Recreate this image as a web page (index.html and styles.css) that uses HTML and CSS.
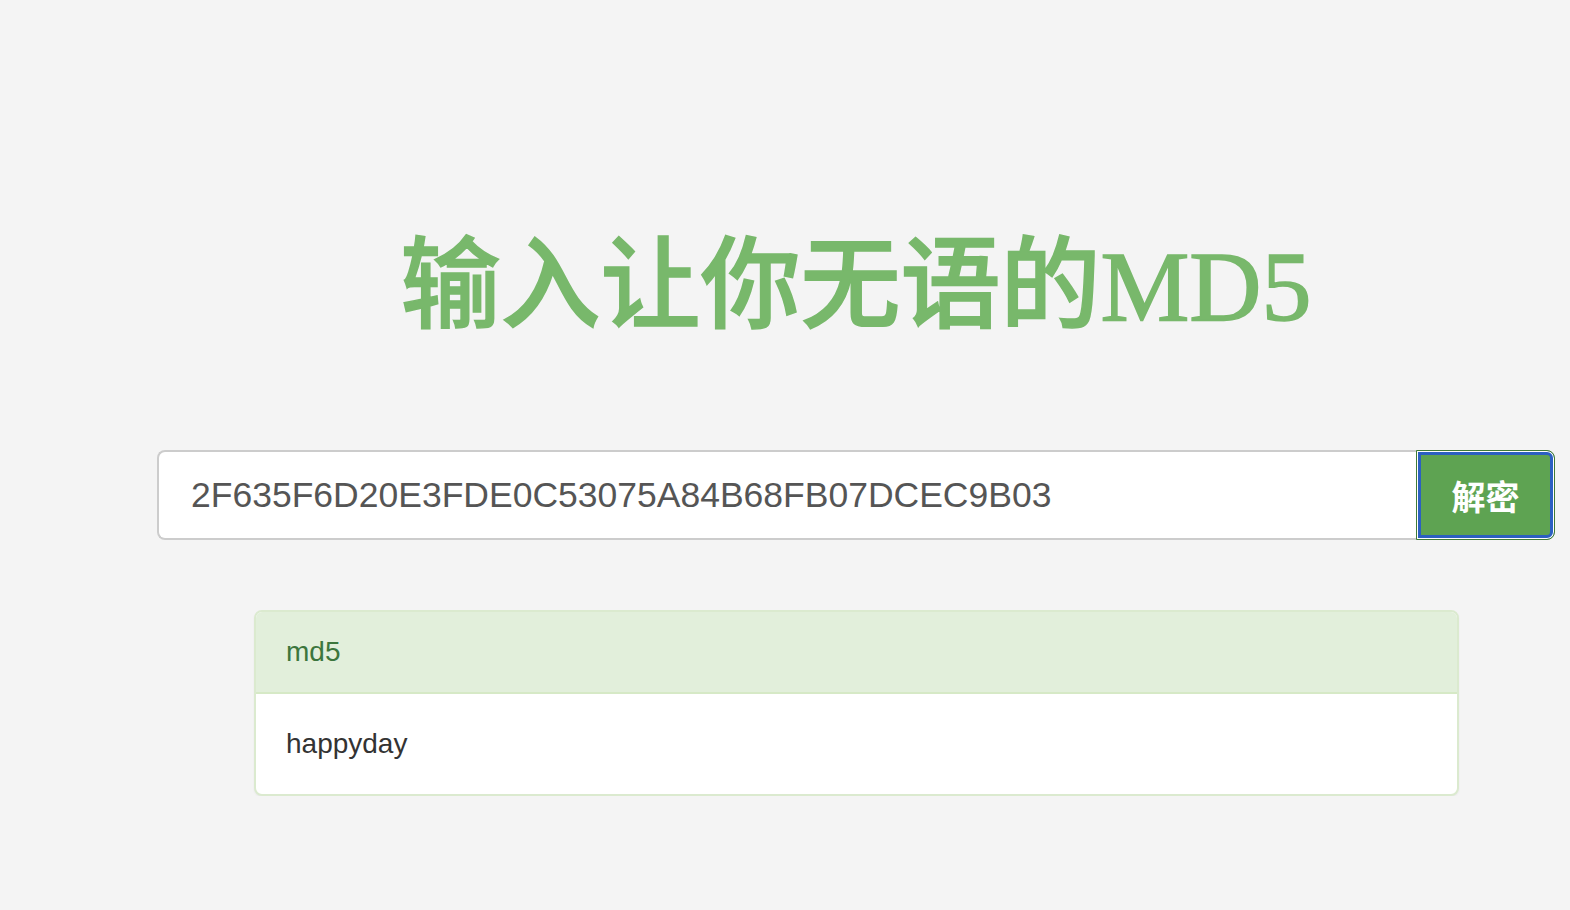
FILE: index.html
```html
<!DOCTYPE html>
<html lang="zh-CN">
<head>
  <meta charset="UTF-8">
  <meta name="viewport" content="width=device-width, initial-scale=1.0">
  <title>MD5 解密</title>
  <link rel="stylesheet" href="styles.css">
</head>
<body>

  <div class="container">
    <!-- Titolo -->
    <h1 class="title">输入让你无语的MD5</h1>

    <!-- Campo di ricerca -->
    <form class="search-group" onsubmit="return false;">
      <input class="search-input" type="text" value="2F635F6D20E3FDE0C53075A84B68FB07DCEC9B03">
      <button class="search-btn" type="submit">解密</button>
    </form>

    <!-- Risultato -->
    <div class="panel">
      <div class="panel-heading">md5</div>
      <div class="panel-body">happyday</div>
    </div>
  </div>

</body>
</html>
```

FILE: styles.css
```css
/* Pagina */
body {
  margin: 0;
  background-color: #f4f4f4;
  font-family: "Liberation Sans", Arial, "Noto Sans CJK SC", sans-serif;
  color: #333;
}

.container {
  width: 1398px;
  margin-left: 157px;
  padding-top: 231px;
}

/* Titolo */
.title {
  margin: 0 0 107px;
  text-align: center;
  font-family: "Liberation Serif", "Noto Sans CJK SC", serif;
  font-size: 100px;
  font-weight: 500;
  line-height: 112px;
  color: #78b86b;
  -webkit-text-stroke: 1.5px #78b86b;
}

/* Campo di ricerca */
.search-group {
  display: flex;
  height: 90px;
  margin: 0 0 70px;
}

.search-input {
  flex: 1;
  min-width: 0;
  box-sizing: border-box;
  height: 90px;
  padding: 0 32px;
  border: 2px solid #ccc;
  border-right: none;
  border-radius: 8px 0 0 8px;
  background: #fff;
  font-family: "Liberation Sans", Arial, sans-serif;
  font-size: 35.5px;
  color: #555;
  outline: none;
}

.search-btn {
  box-sizing: border-box;
  width: 139px;
  height: 90px;
  border: 1px solid #3f7b37;
  border-radius: 0 8px 8px 0;
  background-color: #5ea352;
  box-shadow: inset 0 0 0 1px #fff, inset 0 0 0 4px #2c60c2;
  color: #fff;
  font-family: "Noto Sans CJK SC", sans-serif;
  font-size: 34px;
  font-weight: bold;
  cursor: pointer;
}

/* Pannello risultato */
.panel {
  margin: 0 96px 0 97px;
  border: 2px solid #dbeacf;
  border-radius: 8px;
  background: #fff;
  box-shadow: 0 1px 2px rgba(0, 0, 0, 0.05);
  overflow: hidden;
}

.panel-heading {
  padding: 20px 30px;
  background-color: #e2efdb;
  border-bottom: 2px solid #d6e9c6;
  color: #3c763d;
  font-size: 28px;
  line-height: 40px;
}

.panel-body {
  padding: 30px 30px;
  font-size: 28px;
  line-height: 40px;
  color: #333;
}
```
